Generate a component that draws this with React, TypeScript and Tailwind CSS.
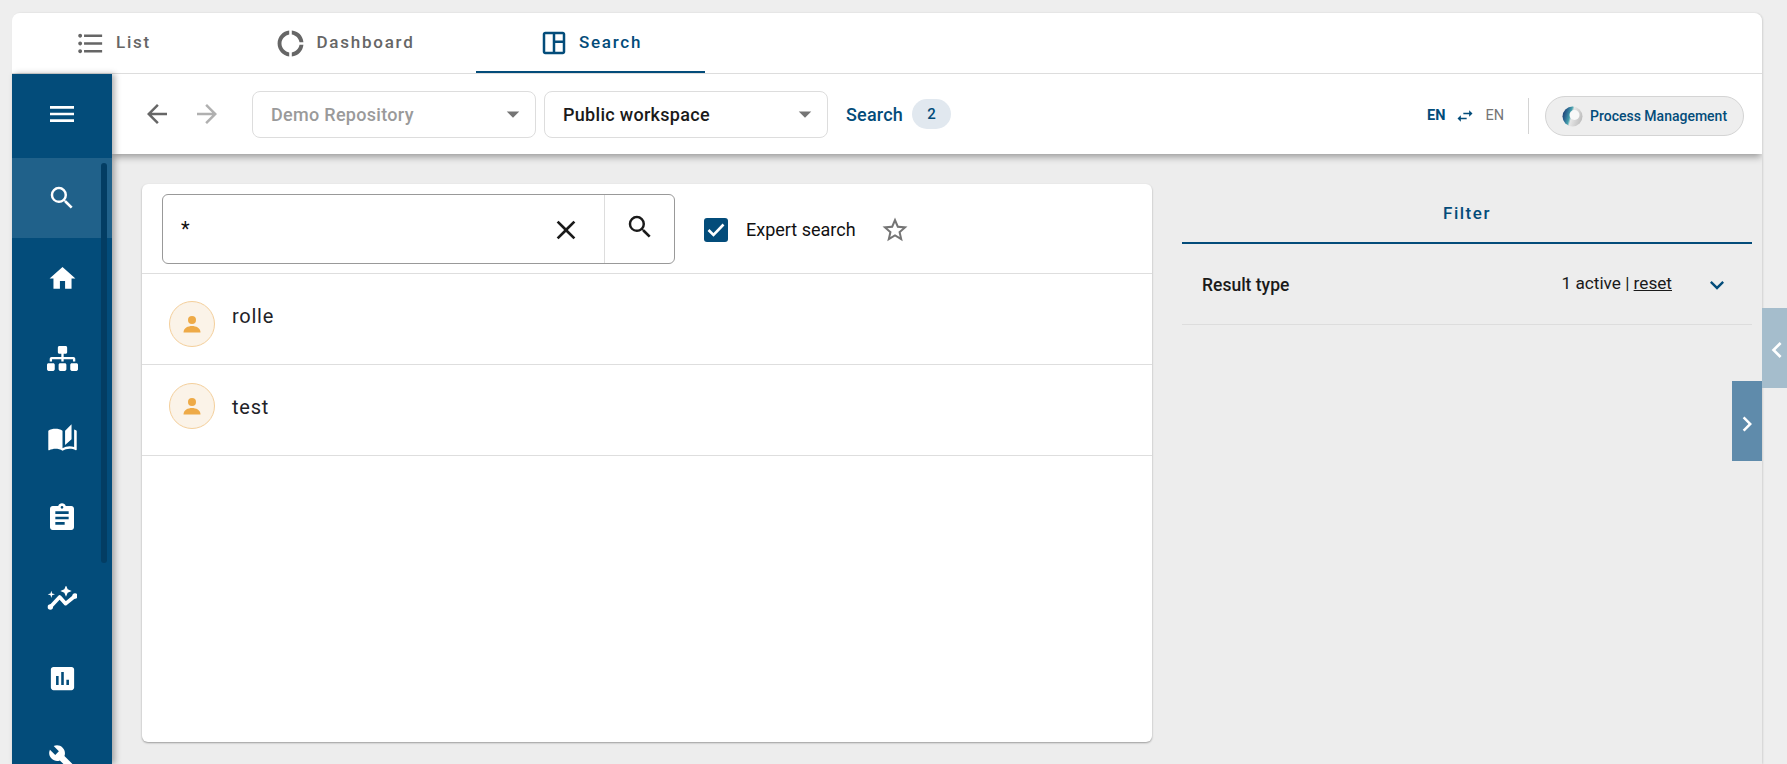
import React from "react";
import {
  MdMenu, MdSearch, MdHome, MdAutoStories, MdAssignment, MdAssessment, MdBuild,
  MdClose, MdArrowBack, MdArrowForward, MdFormatListBulleted, MdDonutLarge, MdOutlineSpaceDashboard,
  MdStarBorder, MdExpandMore, MdChevronLeft, MdChevronRight, MdArrowDropDown, MdSwapHoriz,
} from "react-icons/md";
import { FaSitemap } from "react-icons/fa";

function NavIcon({ children, active }: { children: React.ReactNode; active?: boolean }) {
  return (
    <div className={`h-20 w-full shrink-0 flex items-center justify-center text-white ${active ? "bg-[#20618a]" : ""}`}>
      {children}
    </div>
  );
}

function Tab({ icon, label, width, active }: { icon: React.ReactNode; label: string; width: string; active?: boolean }) {
  return (
    <div
      className={`${width} h-[60px] pt-[2px] flex items-center justify-center gap-[10px] text-[17px] font-medium tracking-[1.75px] border-b-[2px] ${
        active ? "text-[#034c7a] border-[#034c7a]" : "text-[#666666] border-transparent"
      }`}
    >
      {icon}
      <span>{label}</span>
    </div>
  );
}

function Select({ label, disabled }: { label: string; disabled?: boolean }) {
  return (
    <div className="w-[284px] h-[47px] flex items-center justify-between rounded-[8px] border border-[#dddddd] pl-[18px] pr-[7px]">
      <span className={`text-[18px] font-medium tracking-[0.3px] ${disabled ? "text-[#9a9a9a]" : "text-[#1a1a1a]"}`}>{label}</span>
      <MdArrowDropDown size={30} className="text-[#757575]" />
    </div>
  );
}

function Person() {
  return (
    <svg width="18" height="17" viewBox="0 0 18 17" fill="#eeaa47">
      <circle cx="9" cy="4" r="4" />
      <path d="M0.5 16.5 C0.5 12 5 10 9 10 C13 10 17.5 12 17.5 16.5 Z" />
    </svg>
  );
}

function Row({ label, avatarTop }: { label: string; avatarTop: string }) {
  return (
    <div className="h-[91px] border-b border-[#dedede] flex pl-[27px] relative">
      <div className={`${avatarTop} w-[46px] h-[46px] rounded-full bg-[#fbf3e8] border border-[#f4cf9b] flex items-center justify-center`}>
        <Person />
      </div>
      <span className="ml-[17px] mt-[28px] text-[20px] leading-[28px] tracking-[0.75px] text-[#1f2328]">{label}</span>
    </div>
  );
}

function Logo() {
  return (
    <svg width="21" height="21" viewBox="0 0 21 21">
      <defs>
        <linearGradient id="lg1" x1="0" y1="0.3" x2="1" y2="0.6">
          <stop offset="0" stopColor="#1f3f73" />
          <stop offset="0.22" stopColor="#2f6f96" />
          <stop offset="0.38" stopColor="#45a0ac" />
          <stop offset="0.48" stopColor="#e6e6e6" />
          <stop offset="1" stopColor="#bdbdbd" />
        </linearGradient>
      </defs>
      <circle cx="10.5" cy="10.5" r="10" fill="url(#lg1)" />
      <circle cx="12.5" cy="9" r="5" fill="#f8f8f8" />
    </svg>
  );
}

function Trend() {
  return (
    <svg width="30" height="24" viewBox="0 0 90 72" fill="white">
      <path d="M10 63 L38 33 L56 53 L84 30" fill="none" stroke="white" strokeWidth="11" strokeLinecap="round" strokeLinejoin="round" />
      <circle cx="10" cy="63" r="8" />
      <circle cx="84" cy="30" r="8" />
      <path d="M57 -2 L62 10 L74 15 L62 20 L57 32 L52 20 L40 15 L52 10 Z" />
      <path d="M13 14 L15.5 22.5 L24 25 L15.5 27.5 L13 36 L10.5 27.5 L2 25 L10.5 22.5 Z" />
    </svg>
  );
}

export default function App() {
  return (
    <div className="h-[764px] w-[1787px] bg-[#eeeeee] overflow-hidden relative font-['Roboto',sans-serif]">
      <div className="ml-3 mt-[13px] w-[1750px] h-[751px] flex flex-col bg-[#ededed] rounded-t-[8px] shadow-[1px_0_2px_rgba(0,0,0,0.12)]">
        {/* tabs */}
        <div className="h-[61px] shrink-0 bg-white rounded-t-[8px] border-b border-[#dddddd] flex">
          <Tab width="w-[202px]" label="List" icon={<MdFormatListBulleted size={31} />} />
          <Tab width="w-[262px]" label="Dashboard" icon={<MdDonutLarge size={31} />} />
          <Tab width="w-[229px]" label="Search" active icon={<MdOutlineSpaceDashboard size={30} />} />
        </div>

        <div className="flex-1 flex min-h-0">
          {/* sidebar */}
          <div className="w-[100px] shrink-0 bg-[#034c7a] flex flex-col relative z-20 shadow-[3px_0_6px_rgba(0,0,0,0.3)] overflow-hidden">
            <div className="h-[84px] shrink-0 pb-[4px] flex items-center justify-center text-white">
              <MdMenu size={32} />
            </div>
            <NavIcon active><MdSearch size={30} /></NavIcon>
            <NavIcon><MdHome size={31} /></NavIcon>
            <NavIcon><FaSitemap size={31} /></NavIcon>
            <NavIcon><MdAutoStories size={31} /></NavIcon>
            <NavIcon><MdAssignment size={32} /></NavIcon>
            <NavIcon><Trend /></NavIcon>
            <NavIcon><MdAssessment size={31} /></NavIcon>
            <NavIcon><MdBuild size={29} /></NavIcon>
            <div className="absolute left-[89px] top-[89px] w-[6px] h-[400px] rounded-full bg-[#033d63]" />
          </div>

          <div className="flex-1 flex flex-col min-w-0 overflow-hidden">
            {/* toolbar */}
            <div className="h-[80px] shrink-0 bg-white flex items-center relative z-10 shadow-[0_4px_7px_-1px_rgba(0,0,0,0.35)] pl-[30px] pr-[18px]">
              <MdArrowBack size={30} className="text-[#666666]" />
              <MdArrowForward size={30} className="ml-[20px] text-[#b0b0b0]" />
              <div className="ml-[30px] flex gap-2">
                <Select label="Demo Repository" disabled />
                <Select label="Public workspace" />
              </div>
              <span className="ml-[18px] text-[18px] font-medium text-[#034c7a] tracking-[0.2px]">Search</span>
              <span className="ml-[9px] w-[39px] h-[30px] rounded-full bg-[#e1e8ef] flex items-center justify-center text-[15px] font-medium text-[#034c7a]">2</span>
              <div className="ml-auto mt-[4px] flex items-center">
                <span className="text-[14.5px] font-bold text-[#034c7a]">EN</span>
                <MdSwapHoriz size={20} className="mx-[10px] text-[#034c7a]" />
                <span className="text-[14.5px] text-[#757575]">EN</span>
                <div className="ml-[24px] w-px h-[36px] bg-[#d4d4d4]" />
                <div className="ml-4 w-[199px] h-[40px] rounded-full bg-[#eeeeee] border border-[#d4d4d4] flex items-center pl-4 gap-[7px]">
                  <Logo />
                  <span className="text-[14px] font-medium text-[#034c7a] whitespace-nowrap">Process Management</span>
                </div>
              </div>
            </div>

            {/* content */}
            <div className="flex-1 flex pl-[30px] pt-[30px] pb-[22px] min-h-0">
              <div className="w-[1010px] bg-white rounded-[6px] shadow-[0_1px_2px_rgba(0,0,0,0.35)] flex flex-col">
                <div className="h-[90px] shrink-0 border-b border-[#dedede] flex items-start pt-[10px] pl-[20px]">
                  <div className="w-[513px] h-[70px] border border-[#999999] rounded-[6px] flex">
                    <div className="flex-1 flex items-center pl-[18px] pr-[22px] justify-between">
                      <span className="text-[20px] text-[#111111]">*</span>
                      <MdClose size={32} className="text-[#1a1a1a] mt-[1px]" />
                    </div>
                    <div className="w-[70px] border-l border-[#dddddd] flex items-center justify-center">
                      <MdSearch size={30} className="text-[#1a1a1a] -mt-1" />
                    </div>
                  </div>
                  <div className="ml-[29px] mt-[24px] w-[24px] h-[24px] rounded-[3px] bg-[#034c7a] flex items-center justify-center">
                    <svg width="18" height="14" viewBox="0 0 18 14" fill="none" stroke="white" strokeWidth="2.6">
                      <path d="M1.5 7 L6.5 12 L16.5 1.5" />
                    </svg>
                  </div>
                  <span className="ml-[18px] mt-[24px] text-[18px] leading-[23px] text-[#111111]">Expert search</span>
                  <MdStarBorder size={30} className="ml-[24px] mt-[21px] text-[#757575]" />
                </div>
                <Row label="rolle" avatarTop="mt-[27px]" />
                <Row label="test" avatarTop="mt-[18px]" />
              </div>

              <div className="ml-[30px] w-[570px]">
                <div className="border-b-2 border-[#034c7a] h-[60px] pt-[2px] flex items-center justify-center">
                  <span className="text-[17px] font-medium tracking-[1.5px] text-[#034c7a]">Filter</span>
                </div>
                <div className="h-[81px] pt-[2px] border-b border-[#dddddd] flex items-center pl-[20px] pr-[21px]">
                  <span className="text-[17.5px] font-medium text-[#1a1a1a]">Result type</span>
                  <span className="ml-auto text-[17.2px] text-[#1a1a1a] -mt-[2px]">
                    1 active | <span className="underline">reset</span>
                  </span>
                  <MdExpandMore size={28} className="ml-[31px] text-[#034c7a]" />
                </div>
              </div>
            </div>
          </div>
        </div>
      </div>

      {/* side handles */}
      <div className="absolute left-[1762px] top-[308px] w-[25px] h-[80px] pt-[4px] pl-[5px] bg-[#a5bdcc] flex items-center justify-center text-white">
        <MdChevronLeft size={32} className="shrink-0" />
      </div>
      <div className="absolute left-[1732px] top-[381px] w-[30px] h-[80px] pt-[6px] bg-[#5f8bab] flex items-center justify-center text-white">
        <MdChevronRight size={32} />
      </div>
    </div>
  );
}
